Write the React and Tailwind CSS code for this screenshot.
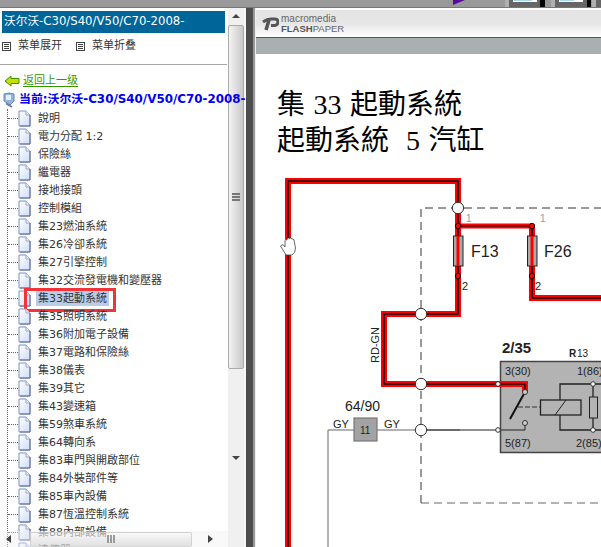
import React from "react";

const items = ["說明","電力分配 1:2","保險絲","繼電器","接地接頭","控制模組","集23燃油系統","集26冷卻系統","集27引擎控制","集32交流發電機和變壓器","集33起動系統","集35照明系統","集36附加電子設備","集37電路和保險絲","集38儀表","集39其它","集43變速箱","集59煞車系統","集64轉向系","集83車門與開啟部位","集84外裝部件等","集85車內設備","集87恆溫控制系統","集88內部設備","遠傳器"];

function PageIcon() {
  return (
    <svg width="13" height="17" viewBox="0 0 13 17" className="shrink-0">
      <defs>
        <linearGradient id="pg" x1="0" y1="0" x2="1" y2="1">
          <stop offset="0" stopColor="#ffffff" />
          <stop offset="1" stopColor="#cfdcf2" />
        </linearGradient>
      </defs>
      <path d="M1 1H8L12 5V16H1Z" fill="url(#pg)" stroke="#7f90c4" strokeWidth="1" />
      <path d="M8 1V5H12" fill="#e8eefa" stroke="#9aa8d4" strokeWidth="1" />
      <path d="M12 5V16H2" fill="none" stroke="#5f6ea8" strokeWidth="1" />
    </svg>
  );
}

function MenuIcon() {
  return (
    <svg width="9" height="9" viewBox="0 0 9 9" className="shrink-0 block">
      <rect x="0.5" y="0.5" width="8" height="8" fill="#fff" stroke="#444" />
      <path d="M2 2.5H7M2 4.5H7M2 6.5H7" stroke="#444" strokeWidth="1" />
    </svg>
  );
}

function Grip({ vertical }) {
  return vertical ? (
    <div className="flex flex-col gap-[1px] w-[8px]">
      <div className="h-[2px] bg-[#777]" />
      <div className="h-[2px] bg-[#777]" />
      <div className="h-[2px] bg-[#777]" />
    </div>
  ) : (
    <div className="flex gap-[1px] h-[8px]">
      <div className="w-[2px] bg-[#777]/70" />
      <div className="w-[2px] bg-[#777]/70" />
      <div className="w-[2px] bg-[#777]/70" />
    </div>
  );
}

function Tree() {
  return (
    <div className="ml-[7px] border-l border-dotted border-[#666]">
      {items.map((t) => {
        const sel = t === "集33起動系統";
        return (
          <div key={t} className="relative flex items-center h-[18px]">
            <div className="w-[10px] shrink-0 border-t border-dotted border-[#666]" />
            <PageIcon />
            <span className={"ml-[5px] px-[2px] leading-[15px] whitespace-nowrap text-[11px] text-[#333] " + (sel ? "bg-[#b9cde9]" : "")}>{t}</span>
            {sel && <div className="absolute left-[16px] top-[-1px] w-[92px] h-[24px] border-[3px] border-[#f23339]" />}
          </div>
        );
      })}
    </div>
  );
}

function LeftPanel() {
  return (
    <div className="relative w-[246px] shrink-0 h-full overflow-hidden flex bg-[#f7f7f7] font-['DejaVu_Sans','Noto_Sans_CJK_TC',sans-serif]">
      <div className="w-[228px] shrink-0 h-full bg-white relative">
        <div className="pt-[3px] pl-[2px] pr-[3px]">
          <div className="h-[22px] bg-[#006699] text-white text-[11.7px] leading-[20px] pl-[2px] whitespace-nowrap font-['DejaVu_Sans','Noto_Sans_CJK_SC',sans-serif]">沃尔沃-C30/S40/V50/C70-2008-</div>
        </div>
        <div className="flex items-center h-[24px] pt-[2px] pl-[2px] text-[11px] text-[#333] font-['DejaVu_Sans','Noto_Sans_CJK_SC',sans-serif]">
          <MenuIcon />
          <span className="ml-[7px]">菜单展开</span>
          <span className="ml-[14px]"><MenuIcon /></span>
          <span className="ml-[7px]">菜单折叠</span>
        </div>
        <div className="mt-[7px] h-[1px] bg-[#a8a8a8] mr-[1px]" />
        <div className="flex items-center h-[18px] mt-[7px] pl-[4px]">
          <svg width="16" height="12" viewBox="0 0 16 12" className="shrink-0">
            <path d="M1 6L7 1V3.5H15V8.5H7V11Z" fill="#c8e000" stroke="#3f8f00" strokeWidth="1" strokeLinejoin="round" />
          </svg>
          <span className="ml-[3px] text-[11px] text-[#339900] underline underline-offset-2 font-['DejaVu_Sans','Noto_Sans_CJK_SC',sans-serif]">返回上一级</span>
        </div>
        <div className="relative z-10 flex items-center h-[19px] pl-[3px]">
          <svg width="12" height="16" viewBox="0 0 12 16" className="shrink-0">
            <path d="M1 2Q6 0 11 2V9L7 13L1 9Z" fill="#8fb4e6" stroke="#6b84b0" />
            <path d="M3 3H8V8H3Z" fill="#e4f0ff" />
            <path d="M3 11.5L9 15" stroke="#6f7f99" strokeWidth="2" />
          </svg>
          <span className="ml-[4px] text-[11.9px] font-bold text-[#0000ee] whitespace-nowrap font-['DejaVu_Sans','Noto_Sans_CJK_SC',sans-serif]">当前:沃尔沃-C30/S40/V50/C70-2008-</span>
        </div>
        <Tree />
        <div className="absolute left-0 bottom-0 w-[228px] h-[16px] flex items-center bg-[#f0f0f0]/40">
          <div className="w-[30px] flex justify-start pl-[6px]">
            <svg width="5" height="8" viewBox="0 0 5 8"><path d="M5 0V8L0 4Z" fill="#444" /></svg>
          </div>
          <div className="w-[162px] h-[15px] rounded-[2px] border border-[#c8c8c8]/70 bg-gradient-to-b from-[#f4f4f4]/30 to-[#c9c9c9]/50 flex items-center justify-center">
            <Grip />
          </div>
          <div className="flex-1 flex justify-center">
            <svg width="5" height="8" viewBox="0 0 5 8"><path d="M0 0V8L5 4Z" fill="#444" /></svg>
          </div>
        </div>
      </div>
      <div className="w-[16px] shrink-0 h-full bg-[#f0f0f0] flex flex-col items-stretch">
        <div className="h-[19px] flex items-center justify-center">
          <svg width="8" height="4" viewBox="0 0 8 4"><path d="M0 4H8L4 0Z" fill="#444" /></svg>
        </div>
        <div className="h-[393px] rounded-[2px] border border-[#aaa] bg-gradient-to-r from-[#f4f4f4] to-[#c8c8c8] flex items-center justify-center">
          <Grip vertical />
        </div>
        <div className="h-[204px] flex items-center justify-center">
          <svg width="8" height="4" viewBox="0 0 8 4"><path d="M0 0H8L4 4Z" fill="#444" /></svg>
        </div>
      </div>
    </div>
  );
}

function Diagram() {
  const T = ({ x, y, s = 11, c = "#222", w = 400, children, ...r }) => (
    <text x={x} y={y} fontSize={s} fill={c} fontWeight={w} fontFamily="'Liberation Sans', sans-serif" {...r}>{children}</text>
  );
  const wire1 = "M288 547V181H458V314H384V384H525V392";
  const wire2 = "M532 226V298H601";
  return (
    <svg viewBox="256 170 345 377" className="w-[345px] h-[377px] block">
      <path d="M421 503V208H601" fill="none" stroke="#333" strokeWidth="1" strokeDasharray="8 5" />
      <path d="M421 503H601" fill="none" stroke="#666" strokeWidth="1" strokeDasharray="8 5" />
      <rect x="500.5" y="361.5" width="110" height="91" fill="#b3b3b3" stroke="#444" strokeWidth="1.5" />
      <path d={wire1} fill="none" stroke="#ff0000" strokeWidth="6" />
      <path d={wire2} fill="none" stroke="#ff0000" strokeWidth="6" />
      <path d="M458 226H532" fill="none" stroke="#ff0000" strokeWidth="5" />
      <path d={wire1} fill="none" stroke="#111" strokeWidth="1.5" />
      <path d={wire2} fill="none" stroke="#111" strokeWidth="1.5" />
      <path d="M458 226H532" fill="none" stroke="#111" strokeWidth="1.2" />
      <path d="M328 547V430H460" fill="none" stroke="#666" strokeWidth="1" />
      <path d="M421 430H525V423" fill="none" stroke="#222" strokeWidth="1" />
      <rect x="453.5" y="236" width="9.5" height="30" fill="#aaa" stroke="#222" />
      <path d="M458 236V266" stroke="#ff0000" strokeWidth="3" />
      <rect x="527.5" y="236" width="9.5" height="30" fill="#aaa" stroke="#222" />
      <path d="M532 236V266" stroke="#ff0000" strokeWidth="3" />
      {[[458,226],[532,226],[458,276],[532,276]].map(([x,y]) => (
        <circle key={x+"-"+y} cx={x} cy={y} r="2.7" fill="#ff0000" stroke="#111" />
      ))}
      {[[458,208],[421,314],[421,384],[421,430]].map(([x,y]) => (
        <circle key={x+"-"+y} cx={x} cy={y} r="5.7" fill="#fff" stroke="#333" />
      ))}
      <T x="466" y="222" s={10} c="#999">1</T>
      <T x="540" y="222" s={10} c="#999">1</T>
      <T x="462" y="290" s={11}>2</T>
      <T x="535" y="290" s={11}>2</T>
      <T x="471" y="257" s={16}>F13</T>
      <T x="544" y="257" s={16}>F26</T>
      <T x="379" y="363" s={11} transform="rotate(-90 379 363)">RD-GN</T>
      <T x="502" y="353" s={15} w={700}>2/35</T>
      <T x="569" y="357" s={10} w={700}>R</T>
      <T x="577" y="357" s={10}>13</T>
      <T x="505" y="375" s={11}>3(30)</T>
      <T x="577" y="375" s={11}>1(86)</T>
      <T x="505" y="447" s={11}>5(87)</T>
      <T x="576" y="447" s={11}>2(85)</T>
      <path d="M525 392L510 419" stroke="#111" strokeWidth="2" />
      <path d="M518 407H540" stroke="#333" strokeDasharray="5 2" />
      <rect x="540.5" y="400" width="40.5" height="15" fill="none" stroke="#222" strokeWidth="1.3" />
      <path d="M555 415L566 400" stroke="#222" />
      <path d="M560 400V384H601M560 415V430H601M593 384V397M593 418V430" fill="none" stroke="#222" strokeWidth="1.3" />
      <rect x="589.5" y="397" width="8" height="21" fill="none" stroke="#222" />
      {[[498,384],[498,430],[593,384],[593,430]].map(([x,y]) => (
        <circle key={x+"_"+y} cx={x} cy={y} r="2.3" fill="#fff" stroke="#333" />
      ))}
      <circle cx="525" cy="392" r="2.5" fill="#ccc" stroke="#333" />
      <circle cx="525" cy="423" r="2.5" fill="#ccc" stroke="#333" />
      <rect x="354" y="418" width="23" height="23" fill="#a3a3a3" stroke="#777" strokeWidth="1.2" />
      <T x="360" y="434" s={10}>11</T>
      <T x="345" y="411" s={14}>64/90</T>
      <T x="333" y="428" s={11}>GY</T>
      <T x="384" y="428" s={11}>GY</T>
      <path d="M280.5 246L283 244.5L285 247V240.5Q285.5 239 287 240V238.5Q288.5 237.5 289.5 238.5Q291 237.5 292 239Q293.5 238.5 294 240L295.5 248Q295.5 253 292 255H286Z" fill="#fff" stroke="#444" strokeWidth="0.8" />
    </svg>
  );
}

function RightPanel() {
  return (
    <div className="flex-1 min-w-0 h-full bg-white border-l border-[#eee] overflow-hidden flex flex-col">
      <div className="h-[2px] shrink-0 bg-white" />
      <div className="h-[27px] shrink-0 bg-gradient-to-b from-[#e4e4e4] via-[#e6e6e6] to-white flex items-center pl-[6px]">
        <svg width="17" height="15" viewBox="0 0 17 15" className="shrink-0">
          <path d="M1 6Q5 3 9 3H13Q16 3 16 6T13 9.5H9" fill="none" stroke="#555" strokeWidth="3" />
          <path d="M7 4L4 14" stroke="#555" strokeWidth="3.5" />
        </svg>
        <div className="ml-[2px] flex flex-col font-['Liberation_Sans',sans-serif] text-[#666]">
          <span className="text-[10px] leading-[10px]">macromedia</span>
          <span className="text-[9.5px] leading-[10px]"><b className="text-[#555]">FLASH</b>PAPER</span>
        </div>
      </div>
      <div className="h-[1px] shrink-0 bg-[#555]" />
      <div className="h-[16px] shrink-0 bg-[#a8b1af]" />
      <div className="pl-[21px] pt-[33px] h-[116px] shrink-0 text-[28px] leading-[36px] text-black whitespace-nowrap [word-spacing:1.5px] font-['Liberation_Serif','Noto_Sans_CJK_TC',serif]">
        <div>集 33 起動系統</div>
        <div>起動系統&nbsp; 5 汽缸</div>
      </div>
      <Diagram />
    </div>
  );
}

export default function App() {
  return (
    <div className="w-[601px] h-[547px] overflow-hidden flex flex-col bg-white">
      <div className="h-[8px] shrink-0 bg-[#999] border-b border-[#777] flex overflow-hidden">
        <svg width="148" height="8" viewBox="0 0 148 8" className="ml-[453px] shrink-0 block">
          <path d="M0 5L12 0H0Z" fill="#5a0a9a" />
          <rect x="52" y="0" width="4" height="8" fill="#b0b0b0" />
          <rect x="56" y="0" width="31" height="7" fill="#666" />
          <rect x="87" y="0" width="5" height="7" fill="#000" />
          <rect x="60" y="0" width="24" height="2" fill="#fff" />
          <rect x="61" y="0" width="18" height="1" fill="#a8d8f0" />
          <rect x="98" y="0" width="4" height="8" fill="#b0b0b0" />
          <rect x="102" y="0" width="32" height="7" fill="#666" />
          <rect x="134" y="0" width="4" height="7" fill="#000" />
          <rect x="106" y="0" width="24" height="2" fill="#fff" />
          <rect x="107" y="0" width="14" height="1" fill="#a8d8f0" />
          <rect x="139" y="0" width="4" height="8" fill="#b0b0b0" />
          <rect x="143" y="0" width="5" height="7" fill="#666" />
        </svg>
      </div>
      <div className="flex-1 min-h-0 flex">
        <LeftPanel />
        <div className="w-[7px] shrink-0 bg-[#4d4d4d]" />
        <div className="w-[2px] shrink-0 bg-[#999]" />
        <RightPanel />
      </div>
    </div>
  );
}
